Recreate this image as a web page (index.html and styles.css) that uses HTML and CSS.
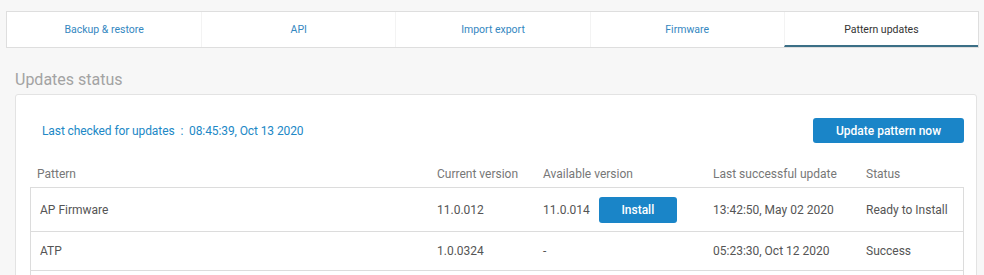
FILE: index.html
```html
<!DOCTYPE html>
<html lang="en">
<head>
  <meta charset="UTF-8">
  <title>Pattern updates</title>
  <link rel="stylesheet" href="styles.css">
</head>
<body>
  <div class="tabs">
    <div class="tab">Backup &amp; restore</div>
    <div class="tab">API</div>
    <div class="tab">Import export</div>
    <div class="tab">Firmware</div>
    <div class="tab active">Pattern updates</div>
  </div>
  <h2 class="title">Updates status</h2>
  <div class="panel">
    <div class="panel-top">
      <div class="checked">Last checked for updates <span class="sep">:</span> 08:45:39, Oct 13 2020</div>
      <button class="btn btn-main">Update pattern now</button>
    </div>
    <div class="table">
      <div class="row head">
        <div class="cell">Pattern</div>
        <div class="cell">Current version</div>
        <div class="cell">Available version</div>
        <div class="cell">Last successful update</div>
        <div class="cell">Status</div>
      </div>
      <div class="row body tall">
        <div class="cell">AP Firmware</div>
        <div class="cell">11.0.012</div>
        <div class="cell avail">11.0.014 <button class="btn btn-install">Install</button></div>
        <div class="cell">13:42:50, May 02 2020</div>
        <div class="cell">Ready to Install</div>
      </div>
      <div class="row body">
        <div class="cell">ATP</div>
        <div class="cell">1.0.0324</div>
        <div class="cell">-</div>
        <div class="cell">05:23:30, Oct 12 2020</div>
        <div class="cell">Success</div>
      </div>
      <div class="row body">
        <div class="cell">&nbsp;</div>
        <div class="cell"></div>
        <div class="cell"></div>
        <div class="cell"></div>
        <div class="cell"></div>
      </div>
    </div>
  </div>
</body>
</html>
```

FILE: styles.css
```css
body {
  margin: 0;
  background-color: #f7f7f7;
  font-family: Roboto, "Liberation Sans", sans-serif;
  font-size: 12px;
  color: #555;
  overflow: hidden;
}
.tabs {
  display: grid;
  grid-template-columns: repeat(5, 1fr);
  margin: 11px 5px 0 6px;
  height: 35px;
  background: #fff;
  border: 1px solid #dedede;
}
.tab {
  display: flex;
  align-items: center;
  justify-content: center;
  font-size: 10.5px;
  color: #3487bf;
  border-left: 1px solid #f3f3f3;
}
.tab:first-child {
  border-left: none;
}
.tab.active {
  color: #333;
  border-bottom: 2px solid #3b6f86;
  padding-top: 1px;
}
.title {
  margin: 22px 0 0 15px;
  font-size: 16px;
  font-weight: normal;
  color: #a3a3a3;
  line-height: 20px;
}
.panel {
  margin: 4px 7px 0 15px;
  background: #fff;
  border: 1px solid #e3e3e3;
  border-radius: 3px;
  padding: 23px 12px 0 14px;
}
.panel-top {
  display: flex;
  justify-content: space-between;
  align-items: center;
}
.checked {
  padding-left: 12px;
  color: #2188c6;
  letter-spacing: -0.1px;
}
.sep {
  margin: 0 3px;
}
.btn {
  border: none;
  border-radius: 3px;
  background-color: #1a85c8;
  color: #fff;
  font-family: inherit;
  font-weight: 500;
  font-size: 12px;
  cursor: pointer;
}
.btn-main {
  width: 151px;
  height: 25px;
}
.btn-install {
  width: 78px;
  height: 26px;
  margin-left: 9px;
}
.table {
  margin-top: 18px;
}
.row {
  display: grid;
  grid-template-columns: 400px 106px 170px 153px 105px;
  align-items: center;
}
.row.head {
  height: 26px;
  color: #777;
}
.row.head .cell {
  padding-left: 7px;
}
.row.body {
  height: 38px;
  border: 1px solid #dcdcdc;
  border-bottom: none;
}
.row.tall {
  height: 43px;
}
.cell {
  padding-left: 9px;
}
.row.body .cell:nth-child(n+2) {
  padding-left: 6px;
}
.avail {
  display: flex;
  align-items: center;
}
```
